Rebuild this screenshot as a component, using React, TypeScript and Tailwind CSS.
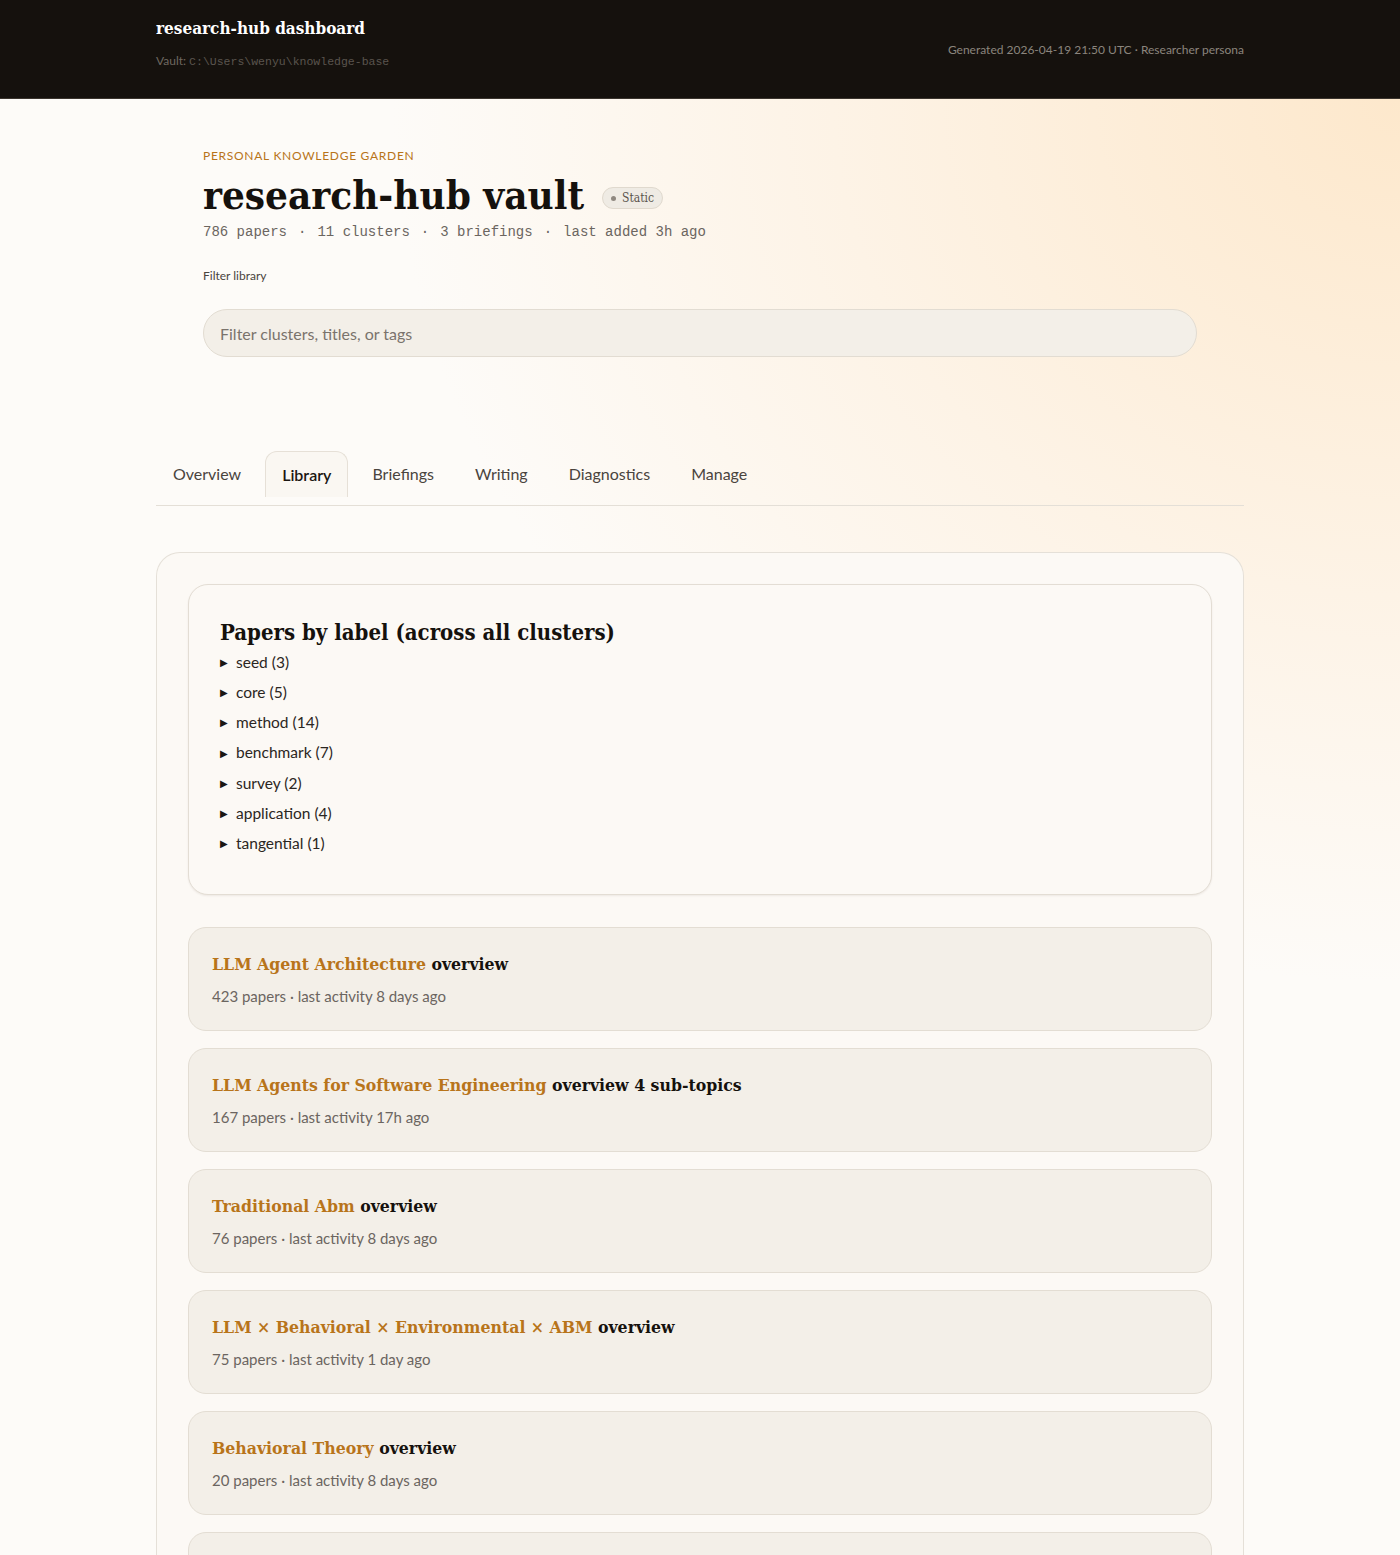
import { useState } from "react";

const labels = [
  { name: "seed", count: 3 },
  { name: "core", count: 5 },
  { name: "method", count: 14 },
  { name: "benchmark", count: 7 },
  { name: "survey", count: 2 },
  { name: "application", count: 4 },
  { name: "tangential", count: 1 },
];

const clusters = [
  { title: "LLM Agent Architecture", extra: "overview", papers: 423, activity: "8 days ago" },
  { title: "LLM Agents for Software Engineering", extra: "overview 4 sub-topics", papers: 167, activity: "17h ago" },
  { title: "Traditional Abm", extra: "overview", papers: 76, activity: "8 days ago" },
  { title: "LLM × Behavioral × Environmental × ABM", extra: "overview", papers: 75, activity: "1 day ago" },
  { title: "Behavioral Theory", extra: "overview", papers: 20, activity: "8 days ago" },
  { title: "Climate Adaptation Modeling", extra: "overview", papers: 12, activity: "3 days ago" },
];

const stats = ["786 papers", "11 clusters", "3 briefings", "last added 3h ago"];

const tabs = ["Overview", "Library", "Briefings", "Writing", "Diagnostics", "Manage"];

const serif = "font-['Georgia','DejaVu_Serif',serif] [font-stretch:semi-condensed]";
const sans = "font-['Lato','Noto_Sans',sans-serif]";
const mono = "font-['Liberation_Mono','Courier_New',monospace]";

const App = () => {
  const [active, setActive] = useState("Library");
  const [query, setQuery] = useState("");

  return (
    <div className={`min-h-[1555px] bg-[#fdfbf8] text-[#1a1612] ${sans}`}>
      <header className="bg-[#15110d] border-b border-[#3a342d]">
        <div className="mx-auto w-[1088px] h-[98px] flex items-start justify-between pt-[17px]">
          <div>
            <h1 className={`${serif} text-[17px] font-bold text-white leading-[22px]`}>
              research-hub dashboard
            </h1>
            <p className="mt-[13px] text-[12px] text-[#6f6860]">
              Vault: <code className={`${mono} text-[11.5px] text-[#5a544d]`}>C:\Users\wenyu\knowledge-base</code>
            </p>
          </div>
          <p className="mt-[24px] text-[12px] text-[#8b857d]">
            Generated 2026-04-19 21:50 UTC · Researcher persona
          </p>
        </div>
      </header>

      <div className="bg-[radial-gradient(ellipse_90%_70%_at_100%_0%,#fde8cc_0%,#fdf3e6_45%,#fdfbf8_80%)]">
        <div className="mx-auto w-[1088px]">
          <section className="px-[47px] pt-[48px] pb-[94px]">
            <p className="text-[12px] tracking-[0.06em] uppercase text-[#b8741a]">
              Personal knowledge garden
            </p>
            <div className="flex items-center gap-[18px] mt-[6px]">
              <h2 className={`${serif} text-[40px] font-bold leading-[48px] text-[#15110d]`}>
                research-hub vault
              </h2>
              <span className={`${serif} inline-flex items-center gap-[6px] rounded-full border border-[#e0d9ce] bg-[#efebe4] px-[8px] py-[1px] text-[12px] text-[#5a544d] mt-[6px]`}>
                <span className="w-[5px] h-[5px] rounded-full bg-[#8f8880]" />
                Static
              </span>
            </div>
            <p className={`${mono} text-[14px] text-[#6b6560] mt-[3px] flex`}>
              {stats.map((s, i) => (
                <span key={s}>
                  {i > 0 && <span className="px-[11px]">·</span>}
                  {s}
                </span>
              ))}
            </p>
            <label className="block mt-[24px] text-[12px] text-[#4a443e]">Filter library</label>
            <input
              value={query}
              onChange={(e) => setQuery(e.target.value)}
              placeholder="Filter clusters, titles, or tags"
              className="mt-[24px] w-full h-[48px] rounded-full border border-[#e2dcd2] bg-[#f3efe8] px-[16px] text-[16px] text-[#2b2622] placeholder:text-[#7a736c] outline-none"
            />
          </section>

          <nav className="flex items-end gap-[7px] border-b border-[#e4dfd7]">
            {tabs.map((t) => (
              <button
                key={t}
                onClick={() => setActive(t)}
                className={
                  t === active
                    ? "h-[46px] mb-[8px] px-[16px] rounded-t-[12px] border border-b-0 border-[#e6e0d7] bg-[#faf7f2] text-[16px] font-semibold text-[#1a1612]"
                    : "h-[46px] mb-[8px] px-[16px] border border-transparent text-[16px] text-[#4a443e]"
                }
              >
                {t}
              </button>
            ))}
          </nav>

          <main className="mt-[46px] rounded-t-[24px] border border-b-0 border-[#e5e0d8] bg-[#fcf9f5] px-[31px] pt-[31px] pb-[40px]">
            <div className="rounded-[20px] border border-[#e3ddd4] bg-[#fcf9f5] shadow-[0_1px_2px_rgba(60,40,20,0.08)] px-[31px] pt-[33px] pb-[35px]">
              <h3 className={`${serif} text-[22px] font-bold leading-[28px] text-[#15110d]`}>
                Papers by label (across all clusters)
              </h3>
              <ul className="mt-[1px] flex flex-col">
                {labels.map((l) => (
                  <li key={l.name} className="h-[30.3px] flex items-center gap-[6px] text-[15.5px] text-[#2b2622]">
                    <span className="text-[10px] w-[10px] text-[#1a1612]">▶</span>
                    {l.name} ({l.count})
                  </li>
                ))}
              </ul>
            </div>

            <div className="mt-[32px] flex flex-col gap-[17px]">
              {clusters.map((c) => (
                <article
                  key={c.title}
                  className="h-[104px] rounded-[18px] border border-[#e3ddd3] bg-[#f3efe8] px-[23px] pt-[24px]"
                >
                  <h4 className={`${serif} text-[17.5px] font-bold leading-[24px]`}>
                    <span className="text-[#b8741a]">{c.title}</span>{" "}
                    <span className="text-[#15110d]">{c.extra}</span>
                  </h4>
                  <p className="mt-[9px] text-[15px] text-[#6b6560]">
                    {c.papers} papers · last activity {c.activity}
                  </p>
                </article>
              ))}
            </div>
          </main>
        </div>
      </div>
    </div>
  );
};

export default App;
